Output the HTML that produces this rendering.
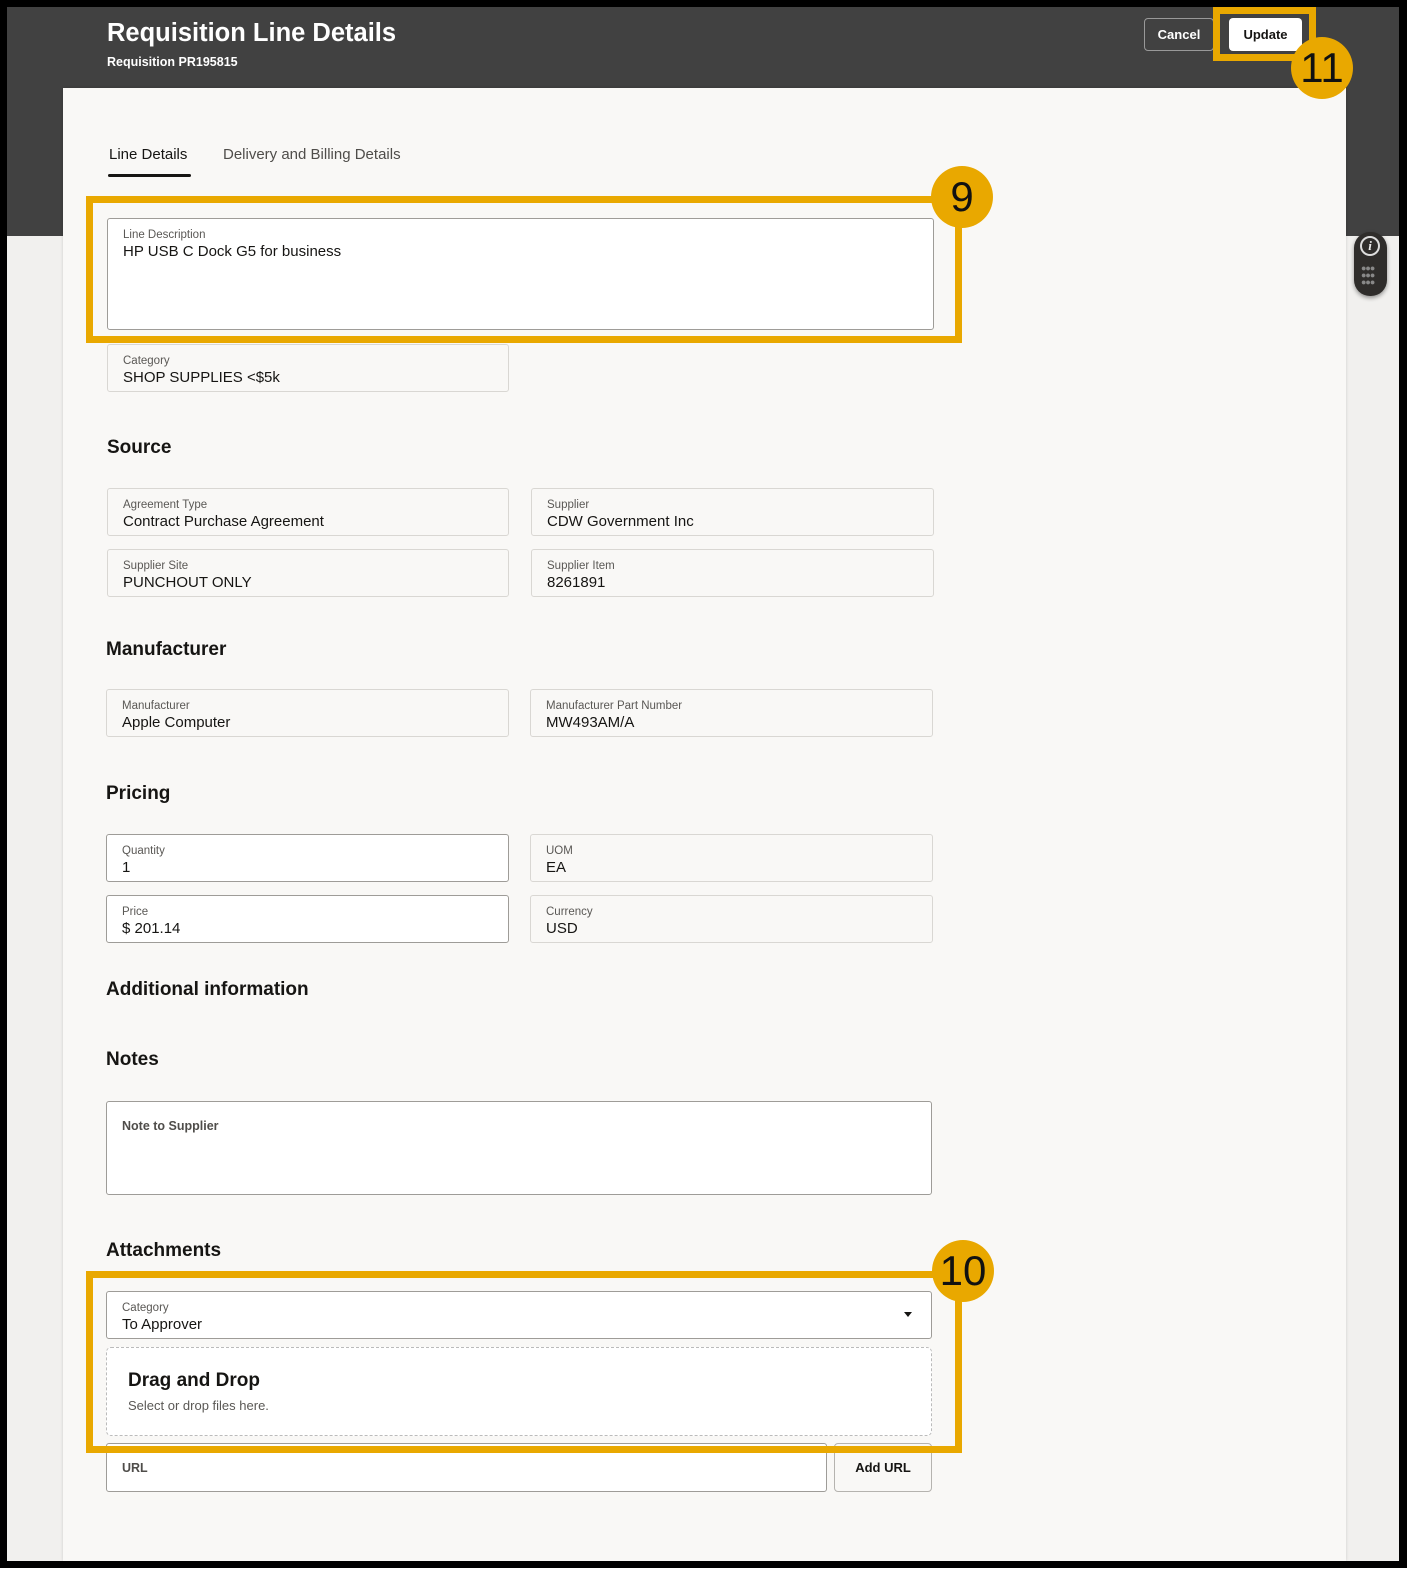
<!DOCTYPE html>
<html><head><meta charset="utf-8"><style>
*{box-sizing:border-box;margin:0;padding:0}
body{width:1428px;height:1590px;background:#fff;position:relative;overflow:hidden;font-family:"Liberation Sans",sans-serif;color:#161513}
.a{position:absolute}
.frame{left:0;top:0;width:1407px;height:1568px;background:#000}
.inner{left:7px;top:7px;width:1392px;height:1554px;background:#f1f0ee}
.hdr{left:7px;top:7px;width:1392px;height:229px;background:#414141}
.card{left:63px;top:88px;width:1283px;height:1473px;background:#f9f8f6;box-shadow:0 0 3px rgba(0,0,0,.15)}
.f{position:absolute;border:1px solid #d9d7d3;border-radius:3px;background:#f9f8f6;height:48px}
.f.e{background:#fff;border-color:#9e9c98}
.f .l{position:absolute;left:15px;top:10px;font-size:11.5px;color:#5a5855}
.f .v{position:absolute;left:15px;top:24px;font-size:15px;color:#161513}
.h{position:absolute;font-size:19px;font-weight:bold;color:#161513}
.y{position:absolute;border:7px solid #e9a800}
.c{position:absolute;width:62px;height:62px;border-radius:50%;background:#e9a800;color:#111;font-size:42px;text-align:center;line-height:62px}
</style></head><body>
<div class="a frame"></div>
<div class="a inner"></div>
<div class="a hdr"></div>
<div class="a" style="left:107px;top:19px;font-size:25.5px;font-weight:bold;color:#fff">Requisition Line Details</div>
<div class="a" style="left:107px;top:55px;font-size:12.5px;font-weight:bold;color:#fff">Requisition PR195815</div>
<div class="a" style="left:1144px;top:18px;width:70px;height:33px;border:1px solid #999;border-radius:4px;color:#fff;font-size:13px;font-weight:bold;text-align:center;line-height:31px">Cancel</div>
<div class="a" style="left:1229px;top:18px;width:73px;height:33px;background:#fff;border-radius:4px;color:#161513;font-size:13px;font-weight:bold;text-align:center;line-height:33px">Update</div>
<div class="a card"></div>
<div class="a" style="left:1354px;top:232px;width:33px;height:64px;background:#2f2d2b;border-radius:16px;box-shadow:0 2px 4px rgba(0,0,0,.4)"></div>
<div class="a" style="left:1360px;top:236px;width:20px;height:20px;border:2px solid #ddd;border-radius:50%;color:#eee;font:italic bold 13px 'Liberation Serif',serif;text-align:center;line-height:16px">i</div>
<div class="a" style="left:1361px;top:265px;width:20px;font-size:9px;line-height:7px;color:#888;letter-spacing:-1px">●●●<br>●●●<br>●●●</div>

<div class="a" style="left:109px;top:146px;font-size:15px;color:#161513">Line Details</div>
<div class="a" style="left:108px;top:174px;width:83px;height:3px;background:#161513;border-radius:2px"></div>
<div class="a" style="left:223px;top:146px;font-size:15px;color:#4f4d4a">Delivery and Billing Details</div>

<div class="f e" style="left:107px;top:218px;width:827px;height:112px"><div class="l">Line Description</div><div class="v">HP USB C Dock G5 for business</div></div>
<div class="f" style="left:107px;top:344px;width:402px"><div class="l">Category</div><div class="v">SHOP SUPPLIES &lt;$5k</div></div>

<div class="h" style="left:107px;top:437px">Source</div>
<div class="f" style="left:107px;top:488px;width:402px"><div class="l">Agreement Type</div><div class="v">Contract Purchase Agreement</div></div>
<div class="f" style="left:531px;top:488px;width:403px"><div class="l">Supplier</div><div class="v">CDW Government Inc</div></div>
<div class="f" style="left:107px;top:549px;width:402px"><div class="l">Supplier Site</div><div class="v">PUNCHOUT ONLY</div></div>
<div class="f" style="left:531px;top:549px;width:403px"><div class="l">Supplier Item</div><div class="v">8261891</div></div>

<div class="h" style="left:106px;top:639px">Manufacturer</div>
<div class="f" style="left:106px;top:689px;width:403px"><div class="l">Manufacturer</div><div class="v">Apple Computer</div></div>
<div class="f" style="left:530px;top:689px;width:403px"><div class="l">Manufacturer Part Number</div><div class="v">MW493AM/A</div></div>

<div class="h" style="left:106px;top:783px">Pricing</div>
<div class="f e" style="left:106px;top:834px;width:403px"><div class="l">Quantity</div><div class="v">1</div></div>
<div class="f" style="left:530px;top:834px;width:403px"><div class="l">UOM</div><div class="v">EA</div></div>
<div class="f e" style="left:106px;top:895px;width:403px"><div class="l">Price</div><div class="v">$ 201.14</div></div>
<div class="f" style="left:530px;top:895px;width:403px"><div class="l">Currency</div><div class="v">USD</div></div>

<div class="h" style="left:106px;top:979px">Additional information</div>
<div class="h" style="left:106px;top:1049px">Notes</div>
<div class="f e" style="left:106px;top:1101px;width:826px;height:94px"><div class="l" style="top:17px;font-size:12.5px;font-weight:bold;color:#4f4d4a">Note to Supplier</div></div>

<div class="h" style="left:106px;top:1240px">Attachments</div>
<div class="f e" style="left:106px;top:1291px;width:826px"><div class="l">Category</div><div class="v">To Approver</div>
<div style="position:absolute;right:19px;top:20px;width:0;height:0;border-left:4px solid transparent;border-right:4px solid transparent;border-top:5px solid #161513"></div></div>
<div class="a" style="left:106px;top:1347px;width:826px;height:89px;border:1px dashed #bbb;border-radius:5px;background:#fff"></div>
<div class="a" style="left:128px;top:1370px;font-size:19px;font-weight:bold">Drag and Drop</div>
<div class="a" style="left:128px;top:1398px;font-size:13px;color:#5a5855">Select or drop files here.</div>
<div class="f e" style="left:106px;top:1443px;width:721px;height:49px"><div class="l" style="top:17px;font-size:12.5px;font-weight:bold;color:#4f4d4a">URL</div></div>
<div class="a" style="left:834px;top:1443px;width:98px;height:49px;border:1px solid #b5b3af;border-radius:4px;background:#f9f8f6;font-size:13px;font-weight:bold;text-align:center;line-height:47px">Add URL</div>

<div class="y" style="left:86px;top:196px;width:876px;height:147px"></div>
<div class="c" style="left:931px;top:166px">9</div>
<div class="y" style="left:86px;top:1271px;width:876px;height:182px"></div>
<div class="c" style="left:932px;top:1240px">10</div>
<div class="y" style="left:1213px;top:7px;width:103px;height:54px"></div>
<div class="c" style="left:1291px;top:37px">11</div>
</body></html>
